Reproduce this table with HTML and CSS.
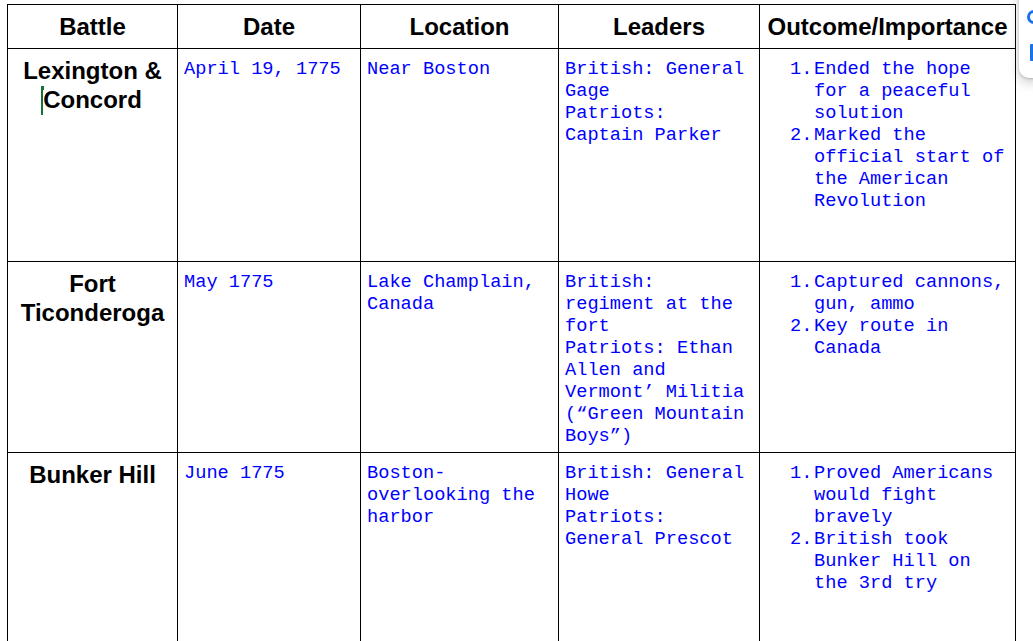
FILE: index.html
```html
<!DOCTYPE html>
<html>
<head>
<meta charset="utf-8">
<link rel="stylesheet" href="styles.css">
</head>
<body>
<table class="chart">
  <colgroup>
    <col class="c-battle">
    <col class="c-date">
    <col class="c-loc">
    <col class="c-lead">
    <col class="c-out">
  </colgroup>
  <thead>
    <tr class="head">
      <th>Battle</th>
      <th>Date</th>
      <th>Location</th>
      <th>Leaders</th>
      <th>Outcome/Importance</th>
    </tr>
  </thead>
  <tbody>
    <tr class="r1">
      <td class="battle">Lexington &amp; <span class="word"><span class="cursor"></span>Concord</span></td>
      <td class="ans">April 19, 1775</td>
      <td class="ans">Near Boston</td>
      <td class="ans">British: General Gage<br>Patriots: Captain Parker</td>
      <td class="ans">
        <ol class="points">
          <li>Ended the hope for a peaceful solution</li>
          <li>Marked the official start of the American Revolution</li>
        </ol>
      </td>
    </tr>
    <tr class="r2">
      <td class="battle">Fort Ticonderoga</td>
      <td class="ans">May 1775</td>
      <td class="ans">Lake Champlain, Canada</td>
      <td class="ans">British: regiment at the fort<br>Patriots: Ethan Allen and Vermont’ Militia (“Green Mountain Boys”)</td>
      <td class="ans">
        <ol class="points">
          <li>Captured cannons, gun, ammo</li>
          <li>Key route in Canada</li>
        </ol>
      </td>
    </tr>
    <tr class="r3">
      <td class="battle">Bunker Hill</td>
      <td class="ans">June 1775</td>
      <td class="ans">Boston-overlooking the harbor</td>
      <td class="ans">British: General Howe<br>Patriots: General Prescot</td>
      <td class="ans">
        <ol class="points">
          <li>Proved Americans would fight bravely</li>
          <li>British took Bunker Hill on the 3rd try</li>
        </ol>
      </td>
    </tr>
  </tbody>
</table>

<div class="side-panel">
  <svg class="side-icons" width="20" height="70" viewBox="0 0 20 70">
    <circle cx="12" cy="17" r="5.5" fill="none" stroke="#1a73e8" stroke-width="3"/>
    <rect x="8" y="44" width="10" height="17" rx="1" fill="#1a73e8"/>
  </svg>
</div>
</body>
</html>
```

FILE: styles.css
```css
html, body {
  background: #ffffff;
}

body {
  margin: 4px 0 0 7px;
  overflow: hidden;
}

.chart {
  border-collapse: collapse;
  table-layout: fixed;
  width: 1009px;
}

.c-battle { width: 170px; }
.c-date { width: 183px; }
.c-loc { width: 198px; }
.c-lead { width: 201px; }
.c-out { width: 256px; }

.chart th,
.chart td {
  border: 1px solid #000000;
  padding: 7px 7px;
  vertical-align: top;
}

.chart th {
  font-family: "Liberation Sans", Arial, sans-serif;
  font-weight: bold;
  font-size: 24px;
  line-height: 29px;
  color: #000000;
  text-align: center;
  height: 29px;
}

.r1 td { height: 198px; }
.r2 td { height: 176px; }
.r3 td { height: 200px; }

.battle {
  font-family: "Liberation Sans", Arial, sans-serif;
  font-weight: bold;
  font-size: 24px;
  line-height: 29px;
  color: #000000;
  text-align: center;
}

.chart td.ans {
  font-family: "Liberation Mono", "Courier New", monospace;
  font-size: 18.67px;
  line-height: 22px;
  color: #0000ff;
  padding: 9px 6px 5px 6px;
}

.points {
  list-style: none;
  margin: 0;
  padding: 0 0 0 24px;
  counter-reset: item;
}

.points li {
  display: flex;
  counter-increment: item;
}

.points li::before {
  content: counter(item) ".";
  flex: 0 0 24px;
}

.word {
  white-space: nowrap;
}

.cursor {
  display: inline-block;
  position: relative;
  width: 2px;
  height: 29px;
  background: #137333;
  vertical-align: top;
  margin: 0 0 0 -2px;
  top: 1px;
}

.cursor::before {
  content: "";
  position: absolute;
  left: 0;
  top: 0;
  width: 3px;
  height: 4px;
  background: #137333;
}

.side-panel {
  position: fixed;
  left: 1019px;
  top: -12px;
  width: 40px;
  height: 90px;
  background: #ffffff;
  border-radius: 10px;
  box-shadow: 0 1px 3px rgba(60, 64, 67, 0.3), 0 4px 8px 3px rgba(60, 64, 67, 0.15);
  overflow: hidden;
}

.side-icons {
  display: block;
  margin: 12px 0 0 3px;
}
```
